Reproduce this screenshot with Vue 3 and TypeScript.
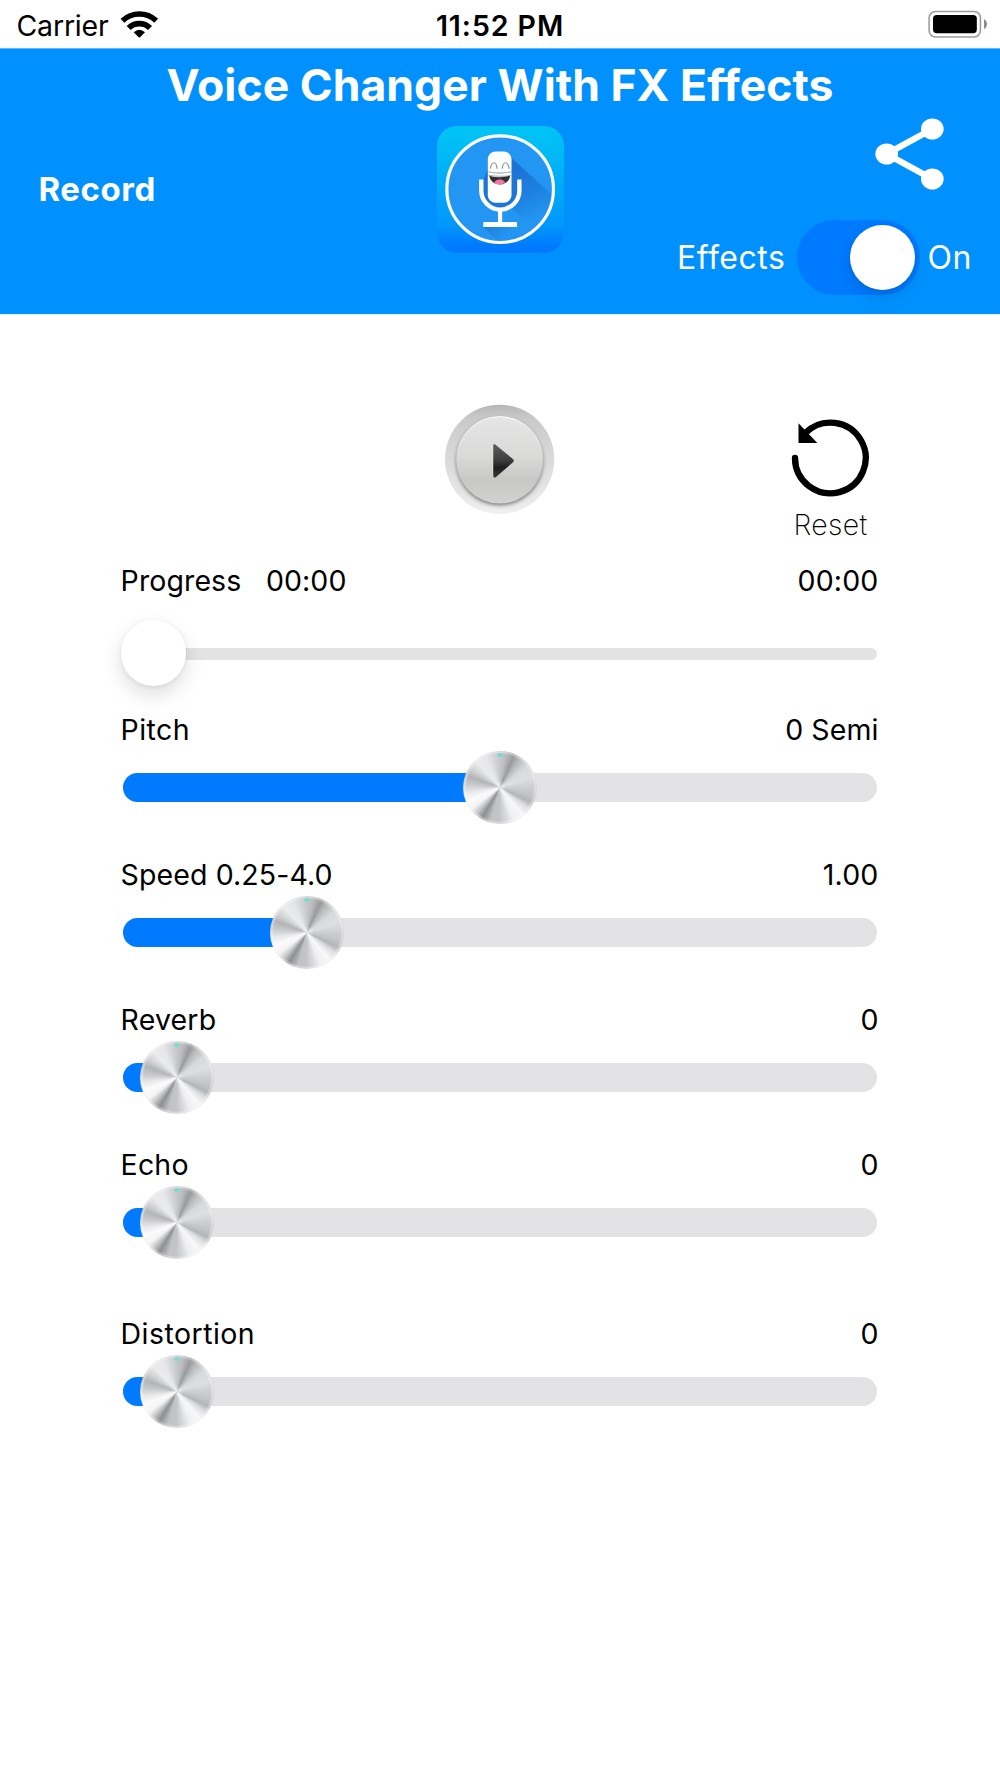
<script setup lang="ts">
import { ref } from 'vue'

interface Control {
  name: string
  value: string
  knob: number
  nameSpacing: string
  valueSpacing: string
}

const effectsOn = ref(true)
const elapsed = ref('00:00')
const duration = ref('00:00')

// knob: distance in px from the left end of the track to the knob centre
const controls = ref<Control[]>([
  { name: 'Pitch', value: '0 Semi', knob: 377, nameSpacing: 'loose', valueSpacing: 'plain' },
  { name: 'Speed 0.25-4.0', value: '1.00', knob: 184, nameSpacing: 'plain', valueSpacing: 'medium' },
  { name: 'Reverb', value: '0', knob: 53.5, nameSpacing: 'medium', valueSpacing: 'plain' },
  { name: 'Echo', value: '0', knob: 53.5, nameSpacing: 'medium', valueSpacing: 'plain' },
  { name: 'Distortion', value: '0', knob: 53.5, nameSpacing: 'loose', valueSpacing: 'plain' },
])
</script>

<template>
  <div class="screen">
    <div class="status">
      <div class="network">
        <span class="carrier">Carrier</span>
        <svg class="wifi" viewBox="358 28 116 86">
          <g fill="none" stroke="#000">
            <path d="M365.500 60A73 73 0 0 1 466.500 60" stroke-width="16.500" />
            <path d="M384 82A46 46 0 0 1 448 82" stroke-width="17.500" />
          </g>
          <path d="M399 95Q416 79 433 95L418 109.500Q416 111 414 109.500Z" />
        </svg>
      </div>
      <span class="clock">11:52 PM</span>
      <svg class="battery" viewBox="1284 30 180 86">
        <rect x="1287.300" y="34.500" width="154" height="76.500" rx="19" fill="#fff" stroke="#9b9b9b" stroke-width="4.600" />
        <rect x="1299" y="45" width="131.500" height="54.500" rx="11" />
        <path d="M1452 58Q1461 62 1461 72.500T1452 87Z" fill="#8c8c8c" />
      </svg>
    </div>

    <header class="header">
      <h1 class="title">Voice Changer With FX Effects</h1>
      <div class="bar">
        <button class="record">Record</button>
        <svg class="logo" viewBox="21 20 380 380">
          <defs>
            <linearGradient id="tile" x1="0" y1="0" x2="0" y2="1">
              <stop offset="0" stop-color="#00c4f4" />
              <stop offset="0.15" stop-color="#00bef5" />
              <stop offset="0.78" stop-color="#0098fb" />
              <stop offset="0.94" stop-color="#007bff" />
              <stop offset="1" stop-color="#0078ff" />
            </linearGradient>
            <linearGradient id="cast" gradientUnits="userSpaceOnUse" x1="225" y1="160" x2="290" y2="310">
              <stop offset="0" stop-color="#1b72d4" />
              <stop offset="0.55" stop-color="#1d82e2" />
              <stop offset="1" stop-color="#2395f2" />
            </linearGradient>
            <linearGradient id="cast2" gradientUnits="userSpaceOnUse" x1="170" y1="320" x2="215" y2="365">
              <stop offset="0" stop-color="#1b74d2" />
              <stop offset="1" stop-color="#2395f2" />
            </linearGradient>
            <clipPath id="disc"><circle cx="210" cy="209" r="158" /></clipPath>
          </defs>
          <rect x="21" y="20" width="380" height="380" rx="60" fill="url(#tile)" />
          <circle cx="210" cy="209" r="159" fill="#2395f2" />
          <g clip-path="url(#disc)">
            <path d="M236 108L400 258V330L280 300L160 180L190 110Z" fill="url(#cast)" />
            <path d="M160 322H260L300 370H208Z" fill="url(#cast2)" opacity="0.700" />
            <path d="M158 180H262V215A52 52 0 0 1 158 215Z" fill="#1b76d6" />
            <path d="M146 180H160V232L190 262L160 250Q146 230 146 212Z" fill="#2395f2" />
          </g>
          <circle cx="210" cy="209" r="159.500" fill="none" stroke="#fff" stroke-width="9.500" />
          <path d="M153.500 180V213A57 57 0 0 0 267.500 213V180" fill="none" stroke="#fff" stroke-width="13" />
          <path d="M203.500 268H216V307H260.500V322H159.500V307H203.500Z" fill="#fff" />
          <rect x="173" y="96" width="71" height="154" rx="23" fill="#fff" />
          <g fill="none" stroke="#8b8f94" stroke-width="3.500">
            <path d="M181 148Q183 130 191 130T201 148" />
            <path d="M216 148Q218 130 226 130T237 148" />
            <path d="M174 157Q209 165 244 157M174 167Q209 174 244 167" stroke="#a9adb1" stroke-width="3" />
          </g>
          <path d="M177 169Q209 178 240 169Q235 194 209 195Q182 194 177 169Z" fill="#303030" />
          <path d="M192 191Q196 179 209 180T225 190Q218 195 209 195T192 191Z" fill="#f279a7" />
        </svg>
        <div class="actions">
          <svg class="share" viewBox="1125 355 207 215">
            <path d="M1297 388L1160 463L1297 538" fill="none" stroke="#fff" stroke-width="19" />
            <g fill="#fff">
              <ellipse cx="1297" cy="388" rx="34" ry="31.500" />
              <ellipse cx="1160" cy="463" rx="34" ry="31.500" />
              <ellipse cx="1297" cy="538" rx="34" ry="31.500" />
            </g>
          </svg>
          <div class="toggle-row">
            <span class="effects">Effects</span>
            <button class="switch" :class="{ on: effectsOn }" @click="effectsOn = !effectsOn">
              <span class="thumb"></span>
            </button>
            <span class="state">{{ effectsOn ? 'On' : 'Off' }}</span>
          </div>
        </div>
      </div>
    </header>

    <main>
      <div class="player">
        <svg class="play" viewBox="43 43 334 334">
          <defs>
            <linearGradient id="rim" x1="0" y1="0" x2="0" y2="1">
              <stop offset="0" stop-color="#b6b6b6" />
              <stop offset="0.12" stop-color="#c9c9c9" />
              <stop offset="0.5" stop-color="#dadada" />
              <stop offset="0.8" stop-color="#e6e6e6" />
              <stop offset="1" stop-color="#f0f0f0" />
            </linearGradient>
            <linearGradient id="face" x1="0" y1="0" x2="0" y2="1">
              <stop offset="0" stop-color="#e6e6e6" />
              <stop offset="0.45" stop-color="#dadad9" />
              <stop offset="0.73" stop-color="#c7c7c6" />
              <stop offset="1" stop-color="#d2d2d1" />
            </linearGradient>
            <linearGradient id="arrow" x1="0" y1="0" x2="0" y2="1">
              <stop offset="0" stop-color="#5e5e5e" />
              <stop offset="0.5" stop-color="#3c3c3c" />
              <stop offset="0.7" stop-color="#1e1e1e" />
              <stop offset="1" stop-color="#3a3a3a" />
            </linearGradient>
            <linearGradient id="shine" x1="0" y1="0" x2="0" y2="1">
              <stop offset="0" stop-color="#fff" />
              <stop offset="1" stop-color="#fff" stop-opacity="0" />
            </linearGradient>
            <filter id="soft" x="-20%" y="-20%" width="140%" height="140%"><feGaussianBlur stdDeviation="6" /></filter>
          </defs>
          <circle cx="210" cy="209" r="164" fill="url(#rim)" />
          <circle cx="210" cy="217" r="129" fill="#6a6a6a" filter="url(#soft)" />
          <circle cx="210" cy="211" r="130.500" fill="url(#face)" />
          <path d="M81 210A129 129 0 0 1 339 210" fill="none" stroke="url(#shine)" stroke-width="3" />
          <path d="M197 164L251 208Q256 213 251 218L198 264Q190 267 190 259V168Q190 159 197 164Z" fill="url(#arrow)" stroke="#efefef" stroke-width="1.500" />
        </svg>
        <div class="reset">
          <svg class="reset-icon" viewBox="60 54 243 243">
            <path d="M75 174A106 106 0 1 0 106 99" fill="none" stroke="#000" stroke-width="19" stroke-linecap="round" />
            <path d="M85.500 70V129H142Z" />
          </svg>
          <span class="reset-label">Reset</span>
        </div>
      </div>

      <section class="progress">
        <div class="labels">
          <span class="plain">Progress</span>
          <span class="elapsed plain">{{ elapsed }}</span>
          <span class="value medium">{{ duration }}</span>
        </div>
        <div class="progress-slider">
          <span class="progress-thumb"></span>
          <span class="progress-track"></span>
        </div>
      </section>

      <section class="controls">
        <div v-for="c in controls" :key="c.name" class="control">
          <div class="labels">
            <span :class="c.nameSpacing">{{ c.name }}</span>
            <span class="value" :class="c.valueSpacing">{{ c.value }}</span>
          </div>
          <div class="slider">
            <div class="track">
              <div class="fill" :style="{ width: c.knob + 'px' }"></div>
            </div>
            <span class="knob" :style="{ left: c.knob + 'px' }"></span>
          </div>
        </div>
      </section>
    </main>
  </div>
</template>

<style>
body {
  margin: 0;
  background: #fff;
}
</style>

<style scoped>
.screen {
  width: 1000px;
  height: 1778px;
  overflow: hidden;
  background: #fff;
  color: #000;
  font-family: Inter, "Liberation Sans", sans-serif;
  font-size: 28.5px;
}
button {
  border: 0;
  padding: 0;
  background: none;
  color: inherit;
  font: inherit;
}
svg {
  display: block;
}
.status {
  display: grid;
  grid-template-columns: 1fr auto 1fr;
  height: 48px;
}
.network {
  display: flex;
}
.carrier {
  margin-left: 16.500px;
  line-height: 52px;
  letter-spacing: -0.2px;
}
.wifi {
  width: 38.670px;
  height: 28.670px;
  margin: 9.600px 0 0 11px;
}
.clock {
  line-height: 52px;
  font-weight: 600;
  letter-spacing: 0.94px;
}
.battery {
  width: 60px;
  height: 28.670px;
  margin: 10px 12px 0 auto;
}
.header {
  box-sizing: border-box;
  height: 266px;
  padding-top: 8px;
  border-top: 1px solid #5cb8ff;
  background: #0091ff;
  color: #fff;
  box-shadow: 0 1px 0 #def1ff;
}
.title {
  margin: 0;
  line-height: 57px;
  height: 56px;
  font-size: 44.5px;
  font-weight: 700;
  letter-spacing: 0.03px;
  text-align: center;
  white-space: nowrap;
}
.bar {
  display: grid;
  grid-template-columns: 437px 127px 1fr;
  height: 201px;
}
.record {
  justify-self: start;
  align-self: start;
  margin: 55.800px 0 0 38.500px;
  line-height: 40px;
  font-size: 33px;
  font-weight: 700;
  letter-spacing: 0.55px;
}
.logo {
  width: 127px;
  height: 127px;
  margin-top: 13.400px;
}
.actions {
  display: flex;
  flex-direction: column;
  align-items: flex-end;
}
.share {
  width: 69px;
  height: 71.670px;
  margin: 5.300px 56px 0 0;
}
.toggle-row {
  display: flex;
  align-items: center;
  height: 75px;
  margin: 30px 28px 0 0;
  font-size: 32px;
  letter-spacing: 0.53px;
}
.switch {
  display: flex;
  align-items: center;
  box-sizing: border-box;
  width: 123px;
  height: 75px;
  margin: 0 7.500px 0 11.600px;
  padding: 0 5px;
  border-radius: 38px;
  background: #4aa9f5;
}
.switch.on {
  justify-content: flex-end;
  background: #007aff;
}
.thumb {
  width: 65px;
  height: 65px;
  border-radius: 50%;
  background: #fff;
  box-shadow: 0 6px 16px rgba(0, 0, 0, 0.13), 0 1px 3px rgba(0, 0, 0, 0.06);
}
.player {
  display: grid;
  grid-template-columns: 444.400px 111.300px 1fr;
  align-items: start;
  height: 246.500px;
}
.play {
  grid-column: 2;
  width: 111.300px;
  height: 111.300px;
  margin-top: 90.400px;
}
.reset {
  display: flex;
  flex-direction: column;
  align-items: center;
  width: 81px;
  margin: 104px 0 0 234.300px;
}
.reset-icon {
  width: 81px;
  height: 81px;
}
.reset-label {
  margin-top: 6px;
  line-height: 40px;
  font-weight: 200;
  letter-spacing: 0.33px;
}
.labels {
  display: flex;
  margin: 0 121.500px 0 120.600px;
  line-height: 39px;
  white-space: nowrap;
}
.value {
  margin-left: auto;
}
.elapsed {
  margin-left: 24.500px;
}
.plain {
  letter-spacing: 0.1px;
}
.medium {
  letter-spacing: 0.18px;
}
.loose {
  letter-spacing: 0.46px;
}
.progress {
  height: 149.500px;
}
.progress-slider {
  display: flex;
  align-items: center;
  margin: 20.500px 123px 0 121px;
  height: 66px;
}
.progress-thumb {
  position: relative;
  width: 65.300px;
  height: 65.300px;
  flex: none;
  border-radius: 50%;
  background: #fff;
  box-shadow: 0 9px 20px rgba(0, 0, 0, 0.13), 0 1px 5px rgba(0, 0, 0, 0.07);
}
.progress-track {
  flex: 1;
  height: 12px;
  margin: 2px 0 0 -10px;
  border-radius: 0 6px 6px 0;
  background: #e3e3e5;
}
.controls {
  display: flex;
  flex-direction: column;
  gap: 29px;
}
.control:last-child {
  margin-top: 24px;
}
.slider {
  position: relative;
  display: flex;
  align-items: center;
  height: 77px;
  margin: 0 123px;
}
.track {
  flex: 1;
  height: 29px;
  overflow: hidden;
  border-radius: 14.500px;
  background: #e3e3e5;
}
.fill {
  height: 100%;
  background: #007aff;
}
.knob {
  position: absolute;
  top: 2px;
  width: 74px;
  height: 73px;
  margin-left: -37px;
  border-radius: 50%;
  background:
    radial-gradient(ellipse 3.500px 2.500px at 50% 4px, #74dcd2 50%, transparent 100%),
    radial-gradient(circle, rgba(255, 255, 255, 0.5) 0, transparent 7px),
    radial-gradient(circle, transparent 33.500px, rgba(255, 255, 255, 0.35) 35px, rgba(225, 225, 228, 0.5) 37px),
    conic-gradient(#c6c7c9 0deg, #bcbdbf 10deg, #999a9c 24deg, #b9babc 35deg, #d8d9db 52deg, #dedfe1 72deg, #cfd0d2 88deg, #c3c4c6 104deg, #b4b5b8 116deg, #dcdddf 126deg, #f8f8f9 140deg, #eeeff3 158deg, #d6d7da 170deg, #c3c4c7 182deg, #c2c3c6 195deg, #a0a1a3 205deg, #8e8f91 211deg, #c0c1c3 221deg, #f4f4f5 233deg, #fbfbfc 248deg, #e8e8ea 262deg, #cacbcc 275deg, #b3b4b6 290deg, #d0d1d3 302deg, #ebebed 317deg, #e6e7e9 335deg, #d2d3d5 350deg, #c6c7c9 360deg);
}
</style>
